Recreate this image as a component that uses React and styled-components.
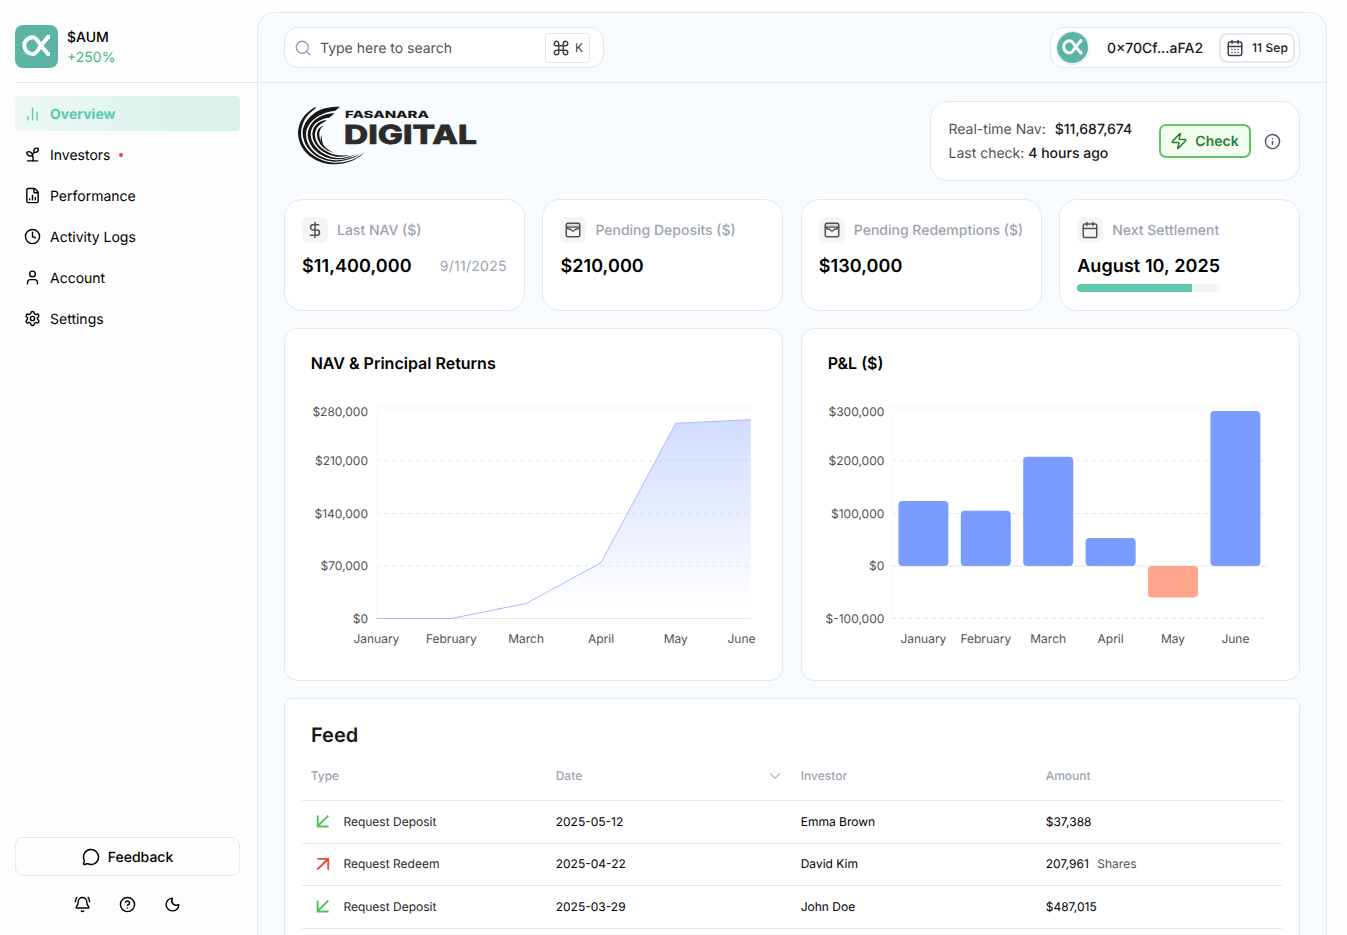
import React from 'react';
import styled, { createGlobalStyle } from 'styled-components';
import {
  Sprout, FileChartColumn, Clock, User, Settings, MessageCircle, BellRing,
  CircleQuestionMark, Moon, Search, Command, CalendarDays, Calendar, Zap, Info,
  DollarSign, ChevronDown,
} from 'lucide-react';

const GlobalStyle = createGlobalStyle`
  *, *::before, *::after { box-sizing: border-box; }
  html, body { margin: 0; height: 100%; overflow: hidden; background: #fdfdfd; }
  body { font-family: Inter, "Liberation Sans", sans-serif; font-size: 14px; color: #000; text-rendering: geometricPrecision; }
  svg { display: block; flex: none; }
  button { font-family: inherit; margin: 0; text-rendering: inherit; }
`;

const Shell = styled.div`
  display: flex;
  height: 935px;
  padding-top: 12px;
  overflow: hidden;
`;

const Sidebar = styled.aside`
  width: 257px;
  flex: none;
  padding-left: 15px;
  display: flex;
  flex-direction: column;
`;

const Brand = styled.div`
  height: 71px;
  padding-top: 13px;
  display: flex;
  gap: 9px;
  border-bottom: 1px solid #e5e7eb;
`;

const BrandText = styled.div`
  padding-top: 3px;
  font-size: 14px;
  line-height: 20px;
`;

const BrandName = styled.div`
  font-weight: 500;
`;

const BrandChange = styled.div`
  color: #3fba78;
`;

const Nav = styled.nav`
  margin-top: 13px;
  width: 225px;
  display: flex;
  flex-direction: column;
  gap: 6px;
`;

const NavItem = styled.a`
  height: 35px;
  padding-left: 9px;
  display: flex;
  align-items: center;
  gap: 9px;
  border-radius: 4px;
  font-size: 14px;
  font-weight: ${(p) => (p.$active ? 700 : 400)};
  color: ${(p) => (p.$active ? '#5bc9ae' : '#000')};
  background: ${(p) => (p.$active ? 'linear-gradient(90deg, #eef8f5, #e0f3ee 55%, #dbf2ec)' : 'none')};
`;

const Label = styled.span`
  padding-top: 2px;
`;

const Dot = styled.span`
  width: 4px;
  height: 4px;
  border-radius: 50%;
  background: #ef4444;
`;

const SidebarFooter = styled.div`
  margin-top: auto;
  width: 225px;
  padding-bottom: 22px;
`;

const FeedbackButton = styled.button`
  width: 100%;
  height: 39px;
  display: flex;
  align-items: center;
  justify-content: center;
  gap: 8px;
  border: 1px solid #e5e7eb;
  border-radius: 8px;
  background: #fdfdfd;
  color: #000;
  font-size: 14px;
  font-weight: 500;
`;

const FooterIcons = styled.div`
  margin-top: 20px;
  display: flex;
  justify-content: center;
  gap: 28px;
`;

const Panel = styled.main`
  width: 1070px;
  height: 1100px;
  flex: none;
  border: 1px solid #e5e7eb;
  border-radius: 18px;
  background: #f9fcff;
`;

const TopBar = styled.header`
  height: 70px;
  padding: 0 26px;
  display: flex;
  align-items: center;
  justify-content: space-between;
  border-bottom: 1px solid #e5e7eb;
`;

const SearchBox = styled.div`
  width: 320px;
  height: 41px;
  padding: 0 13px 0 9px;
  display: flex;
  align-items: center;
  border: 1px solid #e5e7eb;
  border-radius: 14px;
  background: #fff;
`;

const SearchHint = styled.span`
  flex: 1;
  margin-left: 8px;
  padding-top: 2px;
  font-size: 14px;
  color: #525252;
`;

const Shortcut = styled.kbd`
  width: 45px;
  height: 30px;
  display: flex;
  align-items: center;
  justify-content: center;
  gap: 5px;
  border: 1px solid #e5e7eb;
  border-radius: 4px;
  font-family: inherit;
  font-size: 12px;
  color: #404040;
`;

const Account = styled.div`
  width: 250px;
  height: 41px;
  padding: 0 4px 0 5px;
  display: flex;
  align-items: center;
  justify-content: space-between;
  border: 1px solid #e5e7eb;
  border-radius: 14px;
  background: #fff;
`;

const Avatar = styled.div`
  width: 34px;
  height: 34px;
  border: 1.5px solid #e5e7eb;
  border-radius: 50%;
  overflow: hidden;
`;

const Address = styled.span`
  margin-left: 1px;
  padding-top: 2px;
  font-size: 14px;
  font-weight: 500;
  color: #171717;
`;

const DateChip = styled.div`
  width: 76px;
  height: 30px;
  padding: 0 5px 0 5px;
  display: flex;
  align-items: center;
  justify-content: space-between;
  border: 2px solid #e5e7eb;
  border-radius: 8px;
  font-size: 12px;
  letter-spacing: 0.1px;
  font-weight: 500;
  color: #171717;
  white-space: nowrap;
`;

const Content = styled.div`
  padding: 18px 26px 0;
`;

const Intro = styled.div`
  height: 80px;
  display: flex;
  justify-content: space-between;
`;

const LogoSlot = styled.div`
  margin: -3px 0 0 6px;
`;

const Card = styled.section`
  border: 1px solid #e5e7eb;
  border-radius: ${(p) => p.$radius || 18}px;
  background: #fff;
`;

const NavCheck = styled(Card)`
  width: 370px;
  padding: 0 18px 0 17.5px;
  display: flex;
  align-items: center;
`;

const CheckLines = styled.div`
  flex: 1;
  padding-top: 2px;
  font-size: 14px;
  line-height: 24px;
  color: #525252;
  white-space: pre;
`;

const Strong = styled.span`
  font-weight: 500;
  color: #171717;
  margin-left: ${(p) => p.$gap || 0}px;
`;

const CheckButton = styled.button`
  width: 92px;
  height: 34px;
  margin-right: 13.5px;
  padding: 0 0 1px;
  display: flex;
  align-items: center;
  justify-content: center;
  gap: 7px;
  border: 2px solid #62c462;
  border-radius: 7px;
  background: #f2fff0;
  color: #2e7d32;
  font-size: 14px;
  font-weight: 600;
`;

const Stats = styled.div`
  margin-top: 18px;
  display: grid;
  grid-template-columns: repeat(4, minmax(0, 1fr));
  gap: 17.6px;
`;

const Stat = styled(Card)`
  height: 112px;
  padding: 17px 17px 0;
`;

const StatHead = styled.div`
  display: flex;
  align-items: center;
  gap: 9px;
  font-size: 14px;
  font-weight: 500;
  color: #9ca3af;
  white-space: nowrap;
`;

const IconTile = styled.span`
  width: 26px;
  height: 26px;
  display: flex;
  align-items: center;
  justify-content: center;
  border-radius: 7px;
  background: #f5f5f5;
  color: #525252;
`;

const StatRow = styled.div`
  margin-top: 9.5px;
  display: flex;
  align-items: center;
  justify-content: space-between;
`;

const StatValue = styled.span`
  font-size: 18px;
  letter-spacing: 0.08px;
  line-height: 28px;
  font-weight: 600;
  white-space: nowrap;
`;

const StatNote = styled.span`
  font-size: 14px;
  letter-spacing: 0.27px;
  color: #9ca3af;
`;

const Track = styled.div`
  width: 143px;
  height: 8px;
  margin-top: 3.5px;
  border-radius: 4px;
  background: #f3f4f6;
  overflow: hidden;
`;

const Fill = styled.div`
  width: 80.5%;
  height: 100%;
  background: #5bc9ae;
`;

const Charts = styled.div`
  margin-top: 17px;
  display: grid;
  grid-template-columns: 1fr 1fr;
  gap: 18px;
`;

const ChartCard = styled(Card)`
  height: 353px;
  padding: 22px 0 0 0;
`;

const ChartTitle = styled.h2`
  margin: 0 0 1px 25.7px;
  font-size: 16px;
  line-height: 24px;
  font-weight: 600;
`;

const Feed = styled(Card)`
  margin-top: 17px;
  height: 380px;
  padding: 22px 17px 0;
`;

const FeedTitle = styled.h2`
  margin: 0 0 0 9px;
  font-size: 20px;
  line-height: 28px;
  font-weight: 600;
  color: #171717;
`;

const FeedRow = styled.div`
  height: ${(p) => (p.$head ? 52 : 42.6)}px;
  padding: ${(p) => (p.$head ? '2px 0 0' : '0 0 1.3px')};
  display: grid;
  grid-template-columns: repeat(4, 1fr);
  align-items: center;
  border-bottom: 1px solid #e5e7eb;
  font-size: 12px;
  font-weight: ${(p) => (p.$head ? 500 : 400)};
  color: ${(p) => (p.$head ? '#9ca3af' : '#000')};
`;

const Cell = styled.div`
  padding: 0 8px 0 8.7px;
  display: flex;
  align-items: center;
  justify-content: ${(p) => (p.$spread ? 'space-between' : 'flex-start')};
`;

const Kind = styled.span`
  margin-left: 8.7px;
  color: #262626;
`;

const Unit = styled.span`
  margin-left: 8.5px;
  color: #525252;
`;

function AlphaMark({ size, radius }) {
  return (
    <svg width={size} height={size} viewBox="0 0 43 43">
      <rect width="43" height="43" rx={radius} fill="#5cb5a4" />
      <path
        d="M35 12.100H33L25.400 21.200C22.800 25.300 21.500 29 17.700 29A8.400 8.400 0 0 1 17.700 12.200C21.500 12.200 22.800 15.900 25.400 20L33 29.100H35"
        fill="none" stroke="#fff" strokeWidth="4"
      />
    </svg>
  );
}

function OverviewIcon() {
  return (
    <svg width="17" height="17" viewBox="0 0 24 24" fill="none" stroke="currentColor" strokeWidth="1.9" strokeLinecap="round">
      <path d="M5.500 21v-5M12 21V4M18.500 21V10" />
    </svg>
  );
}

function MailWalletIcon({ size, strokeWidth }) {
  return (
    <svg width={size} height={size} viewBox="0 0 24 24" fill="none" stroke="currentColor" strokeWidth={strokeWidth} strokeLinejoin="round">
      <path d="M3 4.500h18v4H3z" fill="currentColor" fillOpacity="0.2" stroke="none" />
      <rect x="3" y="3" width="18" height="18" rx="2" />
      <path d="M3 8.200h18M3 8.200c2 3 3 2.800 5 2.800s2 2.500 4 2.500 2-2.500 4-2.500 3 .2 5-2.800" strokeWidth="1.700" />
    </svg>
  );
}

function FasanaraLogo() {
  return (
    <svg width="200" height="74" viewBox="0 0 600 222">
      <g fill="#161616">
        <path d="M78 26C40 45 24 75 24 108C27 160 75 199 132 199C175 198 208 182 228 158C205 181 172 194 136 194C83 192 35 157 33 108C33 75 50 48 76 32Z" />
        <path d="M150 26C120 26 94 31 77 43C52 60 37 83 38 108C42 154 83 188 132 191C165 191 192 180 210 168C180 182 155 187 136 187C86 183 49 150 48 110C48 74 86 43 136 38Z" />
        <path d="M134 46C98 46 56 66 53 110C55 150 93 180 138 184C162 184 182 178 194 170C172 178 155 181 140 180C98 174 63 144 62 108C63 80 86 62 118 59Z" />
        <path d="M110 66C84 68 66 86 67 112C70 144 100 170 140 176C156 177 168 175 178 171C165 173 152 173 140 171C106 164 75 140 75 110C76 90 88 78 104 72Z" />
        <path d="M101 83C88 86 80 96 81 112C83 138 104 158 132 165C106 153 89 134 88 112C87 98 92 90 101 83Z" />
        <path d="M94 112C90 122 92 138 103 148C97 137 96 126 94 112Z" />
      </g>
      <text x="165" y="59" fontSize="30" fontWeight="800" fill="#161616" textLength="252" lengthAdjust="spacingAndGlyphs">FASANARA</text>
      <text x="162" y="136.500" fontSize="79" fontWeight="800" fill="#2b2b2b" stroke="#2b2b2b" strokeWidth="2" textLength="399" lengthAdjust="spacingAndGlyphs">DIGITAL</text>
    </svg>
  );
}

const MONTHS = ['January', 'February', 'March', 'April', 'May', 'June'];
const GRID_Y = [32, 84.7, 137.5, 190, 242.5];

function AxisLabels({ labels, right }) {
  return labels.map((label, i) => (
    <text key={label} x={right} y={GRID_Y[i] + (i === 0 ? 8 : 4.4)} textAnchor="end">{label}</text>
  ));
}

function AreaChart() {
  const xs = [91.4, 166.3, 241.1, 316, 390.8, 465.7];
  const ys = [242.5, 242.5, 227.5, 186.7, 47.3, 43.7];
  const line = xs.map((x, i) => `${x},${ys[i]}`).join(' ');
  return (
    <svg width="497" height="290" viewBox="0 0 497 290" fontSize="12" fill="#525252">
      <defs>
        <linearGradient id="areaFill" x1="0" y1="43" x2="0" y2="242" gradientUnits="userSpaceOnUse">
          <stop offset="0.05" stopColor="#7a9bff" stopOpacity="0.33" />
          <stop offset="0.95" stopColor="#7a9bff" stopOpacity="0" />
        </linearGradient>
      </defs>
      <g stroke="#e8e9ee" strokeDasharray="4 4">
        {GRID_Y.slice(0, 4).map((y) => <line key={y} x1="91.4" x2="465.7" y1={y} y2={y} />)}
      </g>
      <line x1="91.5" x2="91.5" y1="32" y2="242" stroke="#fafafa" />
      <line x1="91.4" x2="465.7" y1="242.5" y2="242.5" stroke="#e5e7eb" />
      <polygon points={`${line} 465.7,242.5 91.4,242.5`} fill="url(#areaFill)" />
      <polyline points={line} fill="none" stroke="#9db4fd" strokeWidth="0.9" />
      <AxisLabels labels={['$280,000', '$210,000', '$140,000', '$70,000', '$0']} right={83} />
      {MONTHS.map((m, i) => (
        <text key={m} x={i === 5 ? 456.5 : xs[i]} y="267" textAnchor="middle">{m}</text>
      ))}
    </svg>
  );
}

function BarChart() {
  const tops = [125, 134.7, 80.7, 162, 190, 35];
  const heights = [65, 55.3, 109.3, 28, 31.5, 155];
  return (
    <svg width="497" height="290" viewBox="0 0 497 290" fontSize="12" fill="#525252">
      <g stroke="#e8e9ee" strokeDasharray="4 4">
        {[0, 1, 2, 4].map((i) => <line key={i} x1="90" x2="463" y1={GRID_Y[i]} y2={GRID_Y[i]} />)}
      </g>
      <line x1="90.5" x2="90.5" y1="32" y2="242" stroke="#fafafa" />
      <line x1="90" x2="465" y1="190" y2="190" stroke="#e5e7eb" />
      {MONTHS.map((m, i) => (
        <g key={m}>
          <rect x={96.4 + i * 62.4} y={tops[i]} width="50" height={heights[i]} rx="4" fill={i === 4 ? '#ffa58c' : '#7a9bff'} />
          <text x={121.4 + i * 62.4} y="267" textAnchor="middle">{m}</text>
        </g>
      ))}
      <AxisLabels labels={['$300,000', '$200,000', '$100,000', '$0', '$-100,000']} right={82.3} />
    </svg>
  );
}

function FlowIcon({ out }) {
  return (
    <svg width="24" height="18" viewBox="0 0 24 18" fill="none" stroke={out ? '#e5483d' : '#4fc35a'} strokeWidth="1.9">
      <path d={out ? 'M6.200 14.600L16.800 4.200M6.300 3.900H17.200V14.800' : 'M17.300 3.600L7 13.800M6.700 3.600V14.500H17.600'} />
    </svg>
  );
}

const NAV_ITEMS = [
  { label: 'Investors', icon: Sprout, dot: true },
  { label: 'Performance', icon: FileChartColumn },
  { label: 'Activity Logs', icon: Clock },
  { label: 'Account', icon: User },
  { label: 'Settings', icon: Settings },
];

const STATS = [
  { label: 'Last NAV ($)', value: '$11,400,000', note: '9/11/2025', icon: DollarSign },
  { label: 'Pending Deposits ($)', value: '$210,000', icon: MailWalletIcon },
  { label: 'Pending Redemptions ($)', value: '$130,000', icon: MailWalletIcon },
  { label: 'Next Settlement', value: 'August 10, 2025', icon: Calendar, progress: true },
];

const FEED = [
  { type: 'Request Deposit', date: '2025-05-12', who: 'Emma Brown', amount: '$37,388' },
  { type: 'Request Redeem', date: '2025-04-22', who: 'David Kim', amount: '207,961', unit: 'Shares', out: true },
  { type: 'Request Deposit', date: '2025-03-29', who: 'John Doe', amount: '$487,015' },
];

export default function App() {
  return (
    <Shell>
      <GlobalStyle />
      <Sidebar>
        <Brand>
          <AlphaMark size={43} radius={8} />
          <BrandText>
            <BrandName>$AUM</BrandName>
            <BrandChange>+250%</BrandChange>
          </BrandText>
        </Brand>
        <Nav>
          <NavItem $active><OverviewIcon /><Label>Overview</Label></NavItem>
          {NAV_ITEMS.map(({ label, icon: Icon, dot }) => (
            <NavItem key={label}>
              <Icon size={17} strokeWidth={2} />
              <Label>{label}</Label>
              {dot && <Dot />}
            </NavItem>
          ))}
        </Nav>
        <SidebarFooter>
          <FeedbackButton><MessageCircle size={18} strokeWidth={2} /><Label>Feedback</Label></FeedbackButton>
          <FooterIcons>
            <BellRing size={17} strokeWidth={2} />
            <CircleQuestionMark size={17} strokeWidth={2} />
            <Moon size={17} strokeWidth={2} />
          </FooterIcons>
        </SidebarFooter>
      </Sidebar>
      <Panel>
        <TopBar>
          <SearchBox>
            <Search size={18} strokeWidth={1.7} color="#8d9bc2" />
            <SearchHint>Type here to search</SearchHint>
            <Shortcut><Command size={18} strokeWidth={1.9} />K</Shortcut>
          </SearchBox>
          <Account>
            <Avatar><AlphaMark size={31} radius={21} /></Avatar>
            <Address>0×70Cf...aFA2</Address>
            <DateChip><CalendarDays size={18} strokeWidth={2} color="#374151" />11 Sep</DateChip>
          </Account>
        </TopBar>
        <Content>
          <Intro>
            <LogoSlot><FasanaraLogo /></LogoSlot>
            <NavCheck>
              <CheckLines>
                <div>Real-time Nav:<Strong $gap={9}>$11,687,674</Strong></div>
                <div>Last check: <Strong>4 hours ago</Strong></div>
              </CheckLines>
              <CheckButton><Zap size={18} strokeWidth={2} /><Label>Check</Label></CheckButton>
              <Info size={17} strokeWidth={2} color="#4b5563" />
            </NavCheck>
          </Intro>
          <Stats>
            {STATS.map(({ label, value, note, icon: Icon, progress }) => (
              <Stat key={label}>
                <StatHead><IconTile><Icon size={18} strokeWidth={2} /></IconTile>{label}</StatHead>
                <StatRow>
                  <StatValue>{value}</StatValue>
                  {note && <StatNote>{note}</StatNote>}
                </StatRow>
                {progress && <Track><Fill /></Track>}
              </Stat>
            ))}
          </Stats>
          <Charts>
            <ChartCard $radius={13}>
              <ChartTitle>NAV &amp; Principal Returns</ChartTitle>
              <AreaChart />
            </ChartCard>
            <ChartCard $radius={13}>
              <ChartTitle>P&amp;L ($)</ChartTitle>
              <BarChart />
            </ChartCard>
          </Charts>
          <Feed $radius={8}>
            <FeedTitle>Feed</FeedTitle>
            <FeedRow $head>
              <Cell>Type</Cell>
              <Cell $spread>Date<ChevronDown size={18} strokeWidth={1.7} color="#b6bcc6" /></Cell>
              <Cell>Investor</Cell>
              <Cell>Amount</Cell>
            </FeedRow>
            {FEED.map((row) => (
              <FeedRow key={row.date}>
                <Cell><FlowIcon out={row.out} /><Kind>{row.type}</Kind></Cell>
                <Cell>{row.date}</Cell>
                <Cell>{row.who}</Cell>
                <Cell>{row.amount}{row.unit && <Unit>{row.unit}</Unit>}</Cell>
              </FeedRow>
            ))}
          </Feed>
        </Content>
      </Panel>
    </Shell>
  );
}
